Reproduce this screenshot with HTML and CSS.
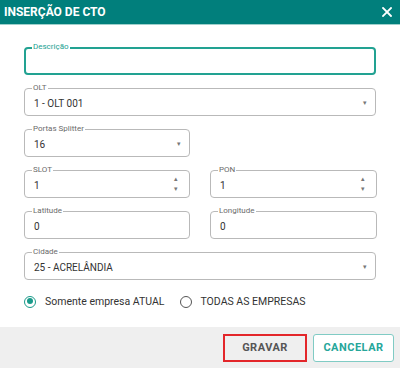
FILE: index.html
```html
<!DOCTYPE html>
<html lang="pt-BR">
<head>
<meta charset="UTF-8">
<meta name="viewport" content="width=device-width, initial-scale=1.0">
<title>Inserção de CTO</title>
<link rel="stylesheet" href="styles.css">
</head>
<body>

<div class="dialog">
    <div class="dialog-header">
        <span class="dialog-title">INSERÇÃO DE CTO</span>
        <svg class="close-icon" width="10" height="10" viewBox="0 0 10 10">
            <path d="M1 1 L9 9 M9 1 L1 9" stroke="#fff" stroke-width="1.8" stroke-linecap="square"/>
        </svg>
    </div>

    <div class="dialog-body">
        <div class="field focused">
            <span class="field-label">Descrição</span>
            <span class="field-value"></span>
        </div>

        <div class="field">
            <span class="field-label">OLT</span>
            <span class="field-value">1 - OLT 001</span>
            <span class="caret">&#9662;</span>
        </div>

        <div class="row">
            <div class="field">
                <span class="field-label">Portas Splitter</span>
                <span class="field-value">16</span>
                <span class="caret">&#9662;</span>
            </div>
            <div></div>
        </div>

        <div class="row">
            <div class="field">
                <span class="field-label">SLOT</span>
                <span class="field-value">1</span>
                <span class="spinner"><span>&#9652;</span><span>&#9662;</span></span>
            </div>
            <div class="field">
                <span class="field-label">PON</span>
                <span class="field-value">1</span>
                <span class="spinner"><span>&#9652;</span><span>&#9662;</span></span>
            </div>
        </div>

        <div class="row">
            <div class="field">
                <span class="field-label">Latitude</span>
                <span class="field-value">0</span>
            </div>
            <div class="field">
                <span class="field-label">Longitude</span>
                <span class="field-value">0</span>
            </div>
        </div>

        <div class="field">
            <span class="field-label">Cidade</span>
            <span class="field-value">25 - ACRELÂNDIA</span>
            <span class="caret">&#9662;</span>
        </div>

        <div class="radios">
            <label class="radio checked"><span class="radio-dot"></span>Somente empresa ATUAL</label>
            <label class="radio"><span class="radio-dot"></span>TODAS AS EMPRESAS</label>
        </div>
    </div>

    <div class="dialog-footer">
        <button class="btn btn-save">GRAVAR</button>
        <button class="btn btn-cancel">CANCELAR</button>
    </div>
</div>

</body>
</html>
```

FILE: styles.css
```css
body {
    font-family: Roboto, "Liberation Sans", Arial, sans-serif;
    margin: 0;
    padding: 0;
    background-color: #fff;
    color: #333;
}
.dialog {
    width: 400px;
    height: 368px;
    display: flex;
    flex-direction: column;
}
.dialog-header {
    height: 24px;
    background-color: #017f7c;
    border-bottom: 1px solid #9fd0cc;
    display: flex;
    align-items: center;
    justify-content: space-between;
    padding: 0 8px 0 4px;
}
.dialog-title {
    color: #fff;
    font-weight: bold;
    font-size: 12px;
}
.close-icon {
    display: block;
}
.dialog-body {
    flex: 1;
    padding: 22px 24px 0 24px;
    display: flex;
    flex-direction: column;
    gap: 13px;
}
.row {
    display: grid;
    grid-template-columns: 166px 167px;
    gap: 20px;
}
.field {
    position: relative;
    height: 28px;
    box-sizing: border-box;
    border: 1px solid #b9b9b9;
    border-radius: 4px;
    display: flex;
    align-items: center;
    padding: 2px 9px 0 9px;
}
.field.focused {
    border: 2px solid #22a292;
    padding-left: 8px;
}
.field-label {
    position: absolute;
    top: -6px;
    left: 7px;
    padding: 0 1px;
    background-color: #fff;
    font-size: 8px;
    line-height: 10px;
    color: #6b6b6b;
}
.field.focused .field-label {
    top: -7px;
    left: 6px;
    color: #22a292;
}
.field-value {
    flex: 1;
    font-size: 10px;
    color: #333;
}
.caret {
    font-size: 7px;
    color: #777;
    margin-right: -1px;
}
.spinner {
    display: flex;
    flex-direction: column;
    font-size: 7px;
    line-height: 10px;
    color: #777;
    margin-right: 2px;
    margin-top: -2px;
}
.radios {
    display: flex;
    align-items: center;
    gap: 15px;
    margin-top: 2px;
    font-size: 10.5px;
    color: #333;
}
.radio {
    display: flex;
    align-items: center;
    gap: 9px;
}
.radio-dot {
    width: 12px;
    height: 12px;
    box-sizing: border-box;
    border: 1.5px solid #555;
    border-radius: 50%;
    position: relative;
}
.radio.checked .radio-dot {
    border-color: #1a9a8a;
}
.radio.checked .radio-dot::after {
    content: '';
    position: absolute;
    top: 1.5px;
    left: 1.5px;
    width: 6px;
    height: 6px;
    border-radius: 50%;
    background-color: #1a9a8a;
}
.dialog-footer {
    height: 41px;
    background-color: #efefef;
    display: flex;
    justify-content: flex-end;
    align-items: center;
    gap: 6px;
    padding-right: 6px;
}
.btn {
    height: 28px;
    font-family: inherit;
    font-weight: bold;
    font-size: 11px;
    letter-spacing: 0.5px;
    border-radius: 3px;
    cursor: pointer;
}
.btn-save {
    width: 84px;
    color: #555;
    background-color: #efefef;
    border: 2px solid #e3262a;
    border-radius: 0;
}
.btn-cancel {
    width: 81px;
    color: #26a69a;
    background-color: #fff;
    border: 1px solid #80cbc4;
}
```
